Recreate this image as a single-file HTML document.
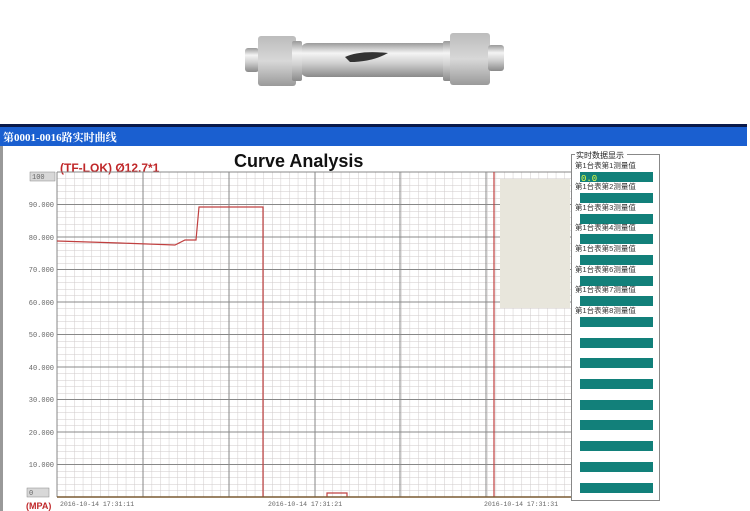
<!DOCTYPE html>
<html><head><meta charset="utf-8"><style>
body{margin:0;width:750px;height:511px;overflow:hidden;background:#fff;font-family:"Liberation Sans","Noto Sans CJK SC",sans-serif}
</style></head><body>
<svg width="750" height="511" xmlns="http://www.w3.org/2000/svg" style="position:absolute;left:0;top:0">
<defs>
<linearGradient id="pipe" x1="0" y1="0" x2="0" y2="1"><stop offset="0" stop-color="#9a9a9a"/><stop offset=".3" stop-color="#f4f4f4"/><stop offset=".6" stop-color="#cfcfcf"/><stop offset="1" stop-color="#8a8a8a"/></linearGradient>
<linearGradient id="nut" x1="0" y1="0" x2="0" y2="1"><stop offset="0" stop-color="#bcbcbc"/><stop offset=".5" stop-color="#d8d8d8"/><stop offset="1" stop-color="#9a9a9a"/></linearGradient>
<pattern id="minor" x="57" y="172" width="8.6" height="6.5" patternUnits="userSpaceOnUse"><path d="M0 0V6.5M0 0H8.6" stroke="#cfcaca" stroke-width="1" fill="none"/></pattern>
</defs>
<rect x="300" y="43" width="150" height="34" rx="8" fill="url(#pipe)"/>
<path d="M345 57 Q360 50 388 53 Q372 62 350 62Z" fill="#333"/>
<rect x="245" y="48" width="14" height="24" rx="3" fill="url(#pipe)"/>
<rect x="258" y="36" width="38" height="50" rx="3" fill="url(#nut)"/>
<rect x="292" y="41" width="10" height="40" rx="2" fill="url(#pipe)"/>
<rect x="443" y="41" width="10" height="40" rx="2" fill="url(#pipe)"/>
<rect x="450" y="33" width="40" height="52" rx="3" fill="url(#nut)"/>
<rect x="488" y="45" width="16" height="26" rx="3" fill="url(#pipe)"/>
<rect x="0" y="124" width="747" height="3" fill="#0a1a4a"/>
<rect x="0" y="127" width="747" height="19" fill="#1a5fd0"/>
<text x="3" y="141" font-size="11" font-weight="bold" fill="#fff" font-family="Liberation Serif,Noto Serif CJK SC,serif">第0001-0016路实时曲线</text>
<rect x="0" y="146" width="3" height="365" fill="#999"/>
<text x="60" y="172" font-size="12" font-weight="bold" fill="#c0282a">(TF-LOK) Ø12.7*1</text>
<text x="234" y="167" font-size="18" font-weight="bold" fill="#111">Curve Analysis</text>
<rect x="57" y="172" width="515" height="325" fill="url(#minor)"/>
<g stroke="#888" stroke-width="1">
<path d="M57 172V497M143 172V497M229 172V497M315 172V497M400 172V497M486 172V497M572 172V497"/>
<path d="M57 172H572M57 204.5H572M57 237H572M57 269.5H572M57 302H572M57 334.5H572M57 367H572M57 399.5H572M57 432H572M57 464.5H572M57 497H572"/>
</g>
<rect x="500" y="179" width="70" height="129" fill="#e8e6dc"/>
<g stroke="#c04040" stroke-width="1.2" fill="none">
<path d="M57 241L120 243L175 245L185 240H196L199 207H263V497"/>
<path d="M494 172V497"/>
<path d="M327 497V493H347V497"/>
</g>
<line x1="57" y1="497" x2="572" y2="497" stroke="#7a5a30" stroke-width="1.5"/>
<g font-family="Liberation Mono,monospace" font-size="7" fill="#666" text-anchor="end">
<text x="54" y="207">90.000</text><text x="54" y="240">80.000</text><text x="54" y="272">70.000</text><text x="54" y="305">60.000</text><text x="54" y="337">50.000</text><text x="54" y="370">40.000</text><text x="54" y="402">30.000</text><text x="54" y="435">20.000</text><text x="54" y="467">10.000</text>
</g>
<rect x="30" y="172" width="25" height="9" fill="#d8d8d8" stroke="#888" stroke-width=".5"/>
<text x="32" y="179" font-size="7" fill="#666" font-family="Liberation Mono,monospace">100</text>
<rect x="27" y="488" width="22" height="9" fill="#d8d8d8" stroke="#888" stroke-width=".5"/>
<text x="29" y="495" font-size="7" fill="#666" font-family="Liberation Mono,monospace">0</text>
<text x="26" y="509" font-size="9" font-weight="bold" fill="#c0282a">(MPA)</text>
<g font-family="Liberation Mono,monospace" font-size="6.5" fill="#666">
<text x="60" y="506">2016-10-14 17:31:11</text><text x="268" y="506">2016-10-14 17:31:21</text><text x="484" y="506">2016-10-14 17:31:31</text>
</g>
<rect x="571.5" y="154.5" width="88" height="346" fill="#fff" stroke="#888"/>
<rect x="575" y="150" width="52" height="9" fill="#fff"/>
<text x="576" y="158" font-size="8" fill="#222">实时数据显示</text>
<g fill="#12807a">
<rect x="580" y="172" width="73" height="10"/><rect x="580" y="193" width="73" height="10"/><rect x="580" y="214" width="73" height="10"/><rect x="580" y="234" width="73" height="10"/><rect x="580" y="255" width="73" height="10"/><rect x="580" y="276" width="73" height="10"/><rect x="580" y="296" width="73" height="10"/><rect x="580" y="317" width="73" height="10"/><rect x="580" y="338" width="73" height="10"/><rect x="580" y="358" width="73" height="10"/><rect x="580" y="379" width="73" height="10"/><rect x="580" y="400" width="73" height="10"/><rect x="580" y="420" width="73" height="10"/><rect x="580" y="441" width="73" height="10"/><rect x="580" y="462" width="73" height="10"/><rect x="580" y="483" width="73" height="10"/>
</g>
<text x="581" y="181" font-size="9" fill="#e8ff40" font-family="Liberation Mono,monospace">0.0</text>
<g font-size="7.5" fill="#333">
<text x="575" y="168">第1台表第1测量值</text><text x="575" y="189">第1台表第2测量值</text><text x="575" y="210">第1台表第3测量值</text><text x="575" y="230">第1台表第4测量值</text><text x="575" y="251">第1台表第5测量值</text><text x="575" y="272">第1台表第6测量值</text><text x="575" y="292">第1台表第7测量值</text><text x="575" y="313">第1台表第8测量值</text>
</g>
</svg>
</body></html>
